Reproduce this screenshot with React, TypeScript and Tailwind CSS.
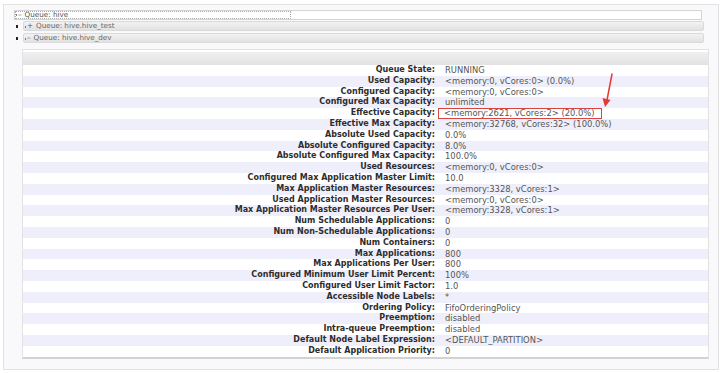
import React from "react";

interface Row {
  label: string;
  value: string;
  marked?: boolean;
}

const rows: Row[] = [
  { label: "Queue State:", value: "RUNNING" },
  { label: "Used Capacity:", value: "<memory:0, vCores:0> (0.0%)" },
  { label: "Configured Capacity:", value: "<memory:0, vCores:0>" },
  { label: "Configured Max Capacity:", value: "unlimited" },
  { label: "Effective Capacity:", value: "<memory:2621, vCores:2> (20.0%)", marked: true },
  { label: "Effective Max Capacity:", value: "<memory:32768, vCores:32> (100.0%)" },
  { label: "Absolute Used Capacity:", value: "0.0%" },
  { label: "Absolute Configured Capacity:", value: "8.0%" },
  { label: "Absolute Configured Max Capacity:", value: "100.0%" },
  { label: "Used Resources:", value: "<memory:0, vCores:0>" },
  { label: "Configured Max Application Master Limit:", value: "10.0" },
  { label: "Max Application Master Resources:", value: "<memory:3328, vCores:1>" },
  { label: "Used Application Master Resources:", value: "<memory:0, vCores:0>" },
  { label: "Max Application Master Resources Per User:", value: "<memory:3328, vCores:1>" },
  { label: "Num Schedulable Applications:", value: "0" },
  { label: "Num Non-Schedulable Applications:", value: "0" },
  { label: "Num Containers:", value: "0" },
  { label: "Max Applications:", value: "800" },
  { label: "Max Applications Per User:", value: "800" },
  { label: "Configured Minimum User Limit Percent:", value: "100%" },
  { label: "Configured User Limit Factor:", value: "1.0" },
  { label: "Accessible Node Labels:", value: "*" },
  { label: "Ordering Policy:", value: "FifoOrderingPolicy" },
  { label: "Preemption:", value: "disabled" },
  { label: "Intra-queue Preemption:", value: "disabled" },
  { label: "Default Node Label Expression:", value: "<DEFAULT_PARTITION>" },
  { label: "Default Application Priority:", value: "0" },
];

// little jstree-ish toggle: dotted corner + sign
const Toggle: React.FC<{ sign: string }> = ({ sign }) => (
  <span className="flex items-center h-full mr-[3px]">
    <span className="w-[1px] h-[2px] bg-[#777] self-end mb-[2px] mr-[1px]" />
    <span className="text-[#555]">{sign}</span>
  </span>
);

const QueueBar: React.FC<{ name: string; sign: string; className?: string }> = ({ name, sign, className }) => (
  <div className={`flex items-center h-[10px] ${className ?? ""}`}>
    <div className="w-[9px] flex justify-center">
      <span className="w-[2px] h-[3px] bg-[#222] ml-[-3px]" />
    </div>
    <div className="w-[681px] h-[10px] rounded-[2px] border border-[#dadada] bg-gradient-to-b from-[#f2f2f2] to-[#e2e2e2] flex items-center pl-[1px] text-[7.2px] text-[#666]">
      <Toggle sign={sign} />
      <span>{name}</span>
    </div>
  </div>
);

const App: React.FC = () => {
  return (
    <div className="w-[720px] h-[373px] bg-white pt-[4px] pl-[3px] relative overflow-hidden" style={{ fontFamily: '"DejaVu Sans", Verdana, sans-serif' }}>
      <div className="w-[716px] h-[366px] border border-[#e2e2e2] bg-[#f9f9fb] pt-[5px] pl-[10px]">
        {/* queue tree */}
        <div className="w-[688px] h-[10px] border border-[#d4d4d4] bg-white flex items-center pl-[1px] text-[7.2px] text-[#555]">
          <div className="h-full flex items-center border border-dotted border-[#aaa] pr-[2px] w-[276px] -ml-[1px]">
            <Toggle sign="–" />
            <span>Queue: hive</span>
          </div>
        </div>
        <QueueBar name="Queue: hive.hive_test" sign="+" className="mt-[1px]" />
        <QueueBar name="Queue: hive.hive_dev" sign="–" className="mt-[2px]" />

        {/* queue info table */}
        <div className="mt-[6px] ml-[8px] w-[687px] bg-white border-t border-l border-r border-[#e2e2e2] border-b-2 border-b-[#d2d2d2] pt-[2px]">
          <div className="h-[13px] bg-gradient-to-b from-[#efefef] to-[#e2e2e2]" />
          {rows.map((r, i) => (
            <div
              key={r.label}
              className={`flex h-[10.8px] items-center leading-[10.8px] ${i % 2 === 1 ? "bg-[#efeffb]" : "bg-white"}`}
            >
              <div className="w-[414px] text-right pr-[2px] text-[8px] font-bold text-[#2d2d2d] whitespace-nowrap">{r.label}</div>
              <div className="pl-[8px] text-[8.4px] text-[#555] whitespace-nowrap">
                {r.marked ? (
                  <span className="inline-block border-[1.5px] border-[#d9453e] -ml-[7px] pl-[5px] pr-[6px] leading-[8.5px]">{r.value}</span>
                ) : (
                  r.value
                )}
              </div>
            </div>
          ))}
        </div>
      </div>

      {/* red annotation arrow */}
      <svg className="absolute left-[598px] top-[70px]" width="20" height="40" viewBox="0 0 20 40">
        <line x1="14" y1="4" x2="9" y2="30" stroke="#e53935" strokeWidth="1.5" strokeLinecap="round" />
        <polygon points="4.5,28 12.5,30 7,37" fill="#e53935" />
      </svg>
    </div>
  );
};

export default App;
